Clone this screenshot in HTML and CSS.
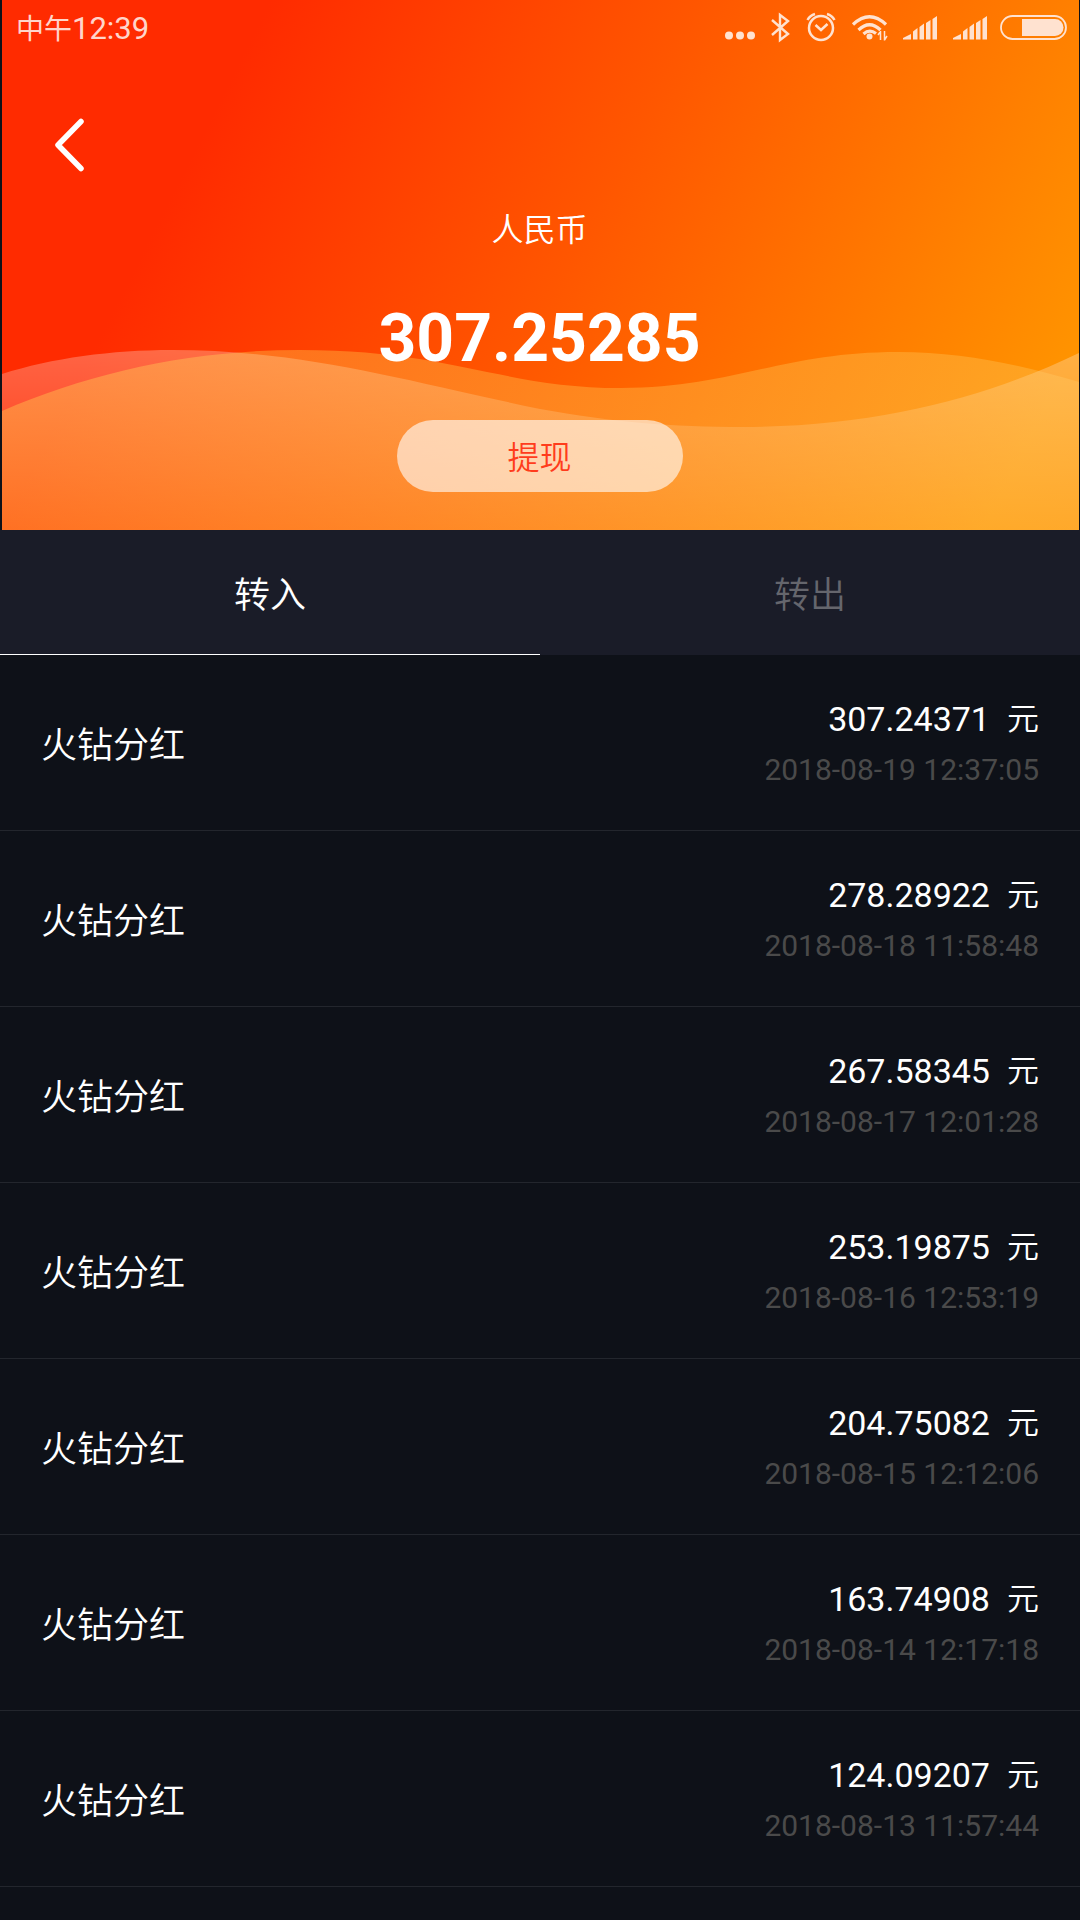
FILE: index.html
```html
<!DOCTYPE html>
<html lang="zh-CN">
<head>
  <meta charset="UTF-8" />
  <meta name="viewport" content="width=device-width, initial-scale=1.0" />
  <title>人民币</title>
  <link rel="stylesheet" href="styles.css">
</head>
<body>
  <header class="hero">
    <svg class="waves" viewBox="0 0 1077 530" preserveAspectRatio="none">
      <defs>
        <linearGradient id="fadeBack" x1="0" y1="350" x2="0" y2="530" gradientUnits="userSpaceOnUse">
          <stop offset="0" stop-color="#fff" stop-opacity=".27" />
          <stop offset="1" stop-color="#fff" stop-opacity=".05" />
        </linearGradient>
        <linearGradient id="fadeFront" x1="0" y1="0" x2="1077" y2="0" gradientUnits="userSpaceOnUse">
          <stop offset="0" stop-color="#fffa58" stop-opacity=".3" />
          <stop offset="1" stop-color="#ffcf70" stop-opacity=".3" />
        </linearGradient>
      </defs>
      <path fill="url(#fadeBack)" d="M0 374C50 358 110 350 170 350C300 350 400 380 538 409C610 422 670 427 741 427C880 427 990 395 1077 353V530H0Z" />
      <path fill="url(#fadeFront)" d="M0 411C90 372 190 350 298 350C450 350 500 388 619 388C730 388 780 352 896 352C960 352 1020 365 1077 382V530H0Z" />
    </svg>

    <div class="status">
      <span class="time">中午<span class="clock">12:39</span></span>
      <svg class="status-icons" width="346" height="36" viewBox="724 10 346 36" fill="none" stroke="#ffe2d0">
        <g fill="#ffe2d0" stroke="none">
          <circle cx="729" cy="35.5" r="4" /><circle cx="740" cy="35.5" r="4" /><circle cx="751" cy="35.5" r="4" />
        </g>
        <path stroke-width="2.4" d="M772 20L788 34L780 40V15L788 21L772 35" />
        <circle cx="821" cy="28" r="12" stroke-width="2.5" />
        <path stroke-width="2.5" d="M815.5 25L821 30L827.5 24M807.5 20Q810 15.5 815 14M827 14Q832 15.5 834.5 20" />
        <path stroke-width="3.2" d="M853 24.5Q869.5 9 886 24.5M858.5 30Q869.5 19.5 880.5 30M863.5 34Q869.5 28.5 876 33.5" />
        <circle cx="869.5" cy="36.5" r="3" fill="#ffe2d0" stroke="none" />
        <path stroke-width="1.5" d="M880.5 31V40M878 35L880.5 31.5M884.5 31V40.5M887 36L884.5 40" />
        <g id="signal" fill="#ffe2d0" stroke="none">
          <path d="M903 39.5V38L911 34V39.5ZM913 39.5V31.5L917.5 28V39.5ZM919.5 39.5V27L924 23.5V39.5ZM926 39.5V23L930.5 20V39.5ZM932.5 39.5V19L937 16V39.5Z" />
        </g>
        <use href="#signal" x="50" />
        <rect x="1001" y="16" width="65" height="23" rx="11.5" stroke-width="1.8" />
        <path fill="#ffe2d0" stroke="none" d="M1022 19H1055A8.5 8.5 0 0 1 1055 36H1022Z" />
      </svg>
    </div>

    <a class="back" href="#">
      <svg width="30" height="54" viewBox="0 0 30 54" fill="none" stroke="#fff" stroke-width="5.5" stroke-linecap="round" stroke-linejoin="round">
        <path d="M27 3.5L4 27L27 50.5" />
      </svg>
    </a>
    <div class="currency">人民币</div>
    <div class="balance">307.25285</div>
    <button class="withdraw">提现</button>
  </header>

  <nav class="tabs">
    <div class="tab active">转入</div>
    <div class="tab">转出</div>
  </nav>

  <ul class="list">
    <li class="row">
      <span class="name">火钻分红</span>
      <div class="info">
        <div class="amount"><span>307.24371</span><span class="unit">元</span></div>
        <div class="date">2018-08-19 12:37:05</div>
      </div>
    </li>
    <li class="row">
      <span class="name">火钻分红</span>
      <div class="info">
        <div class="amount"><span>278.28922</span><span class="unit">元</span></div>
        <div class="date">2018-08-18 11:58:48</div>
      </div>
    </li>
    <li class="row">
      <span class="name">火钻分红</span>
      <div class="info">
        <div class="amount"><span>267.58345</span><span class="unit">元</span></div>
        <div class="date">2018-08-17 12:01:28</div>
      </div>
    </li>
    <li class="row">
      <span class="name">火钻分红</span>
      <div class="info">
        <div class="amount"><span>253.19875</span><span class="unit">元</span></div>
        <div class="date">2018-08-16 12:53:19</div>
      </div>
    </li>
    <li class="row">
      <span class="name">火钻分红</span>
      <div class="info">
        <div class="amount"><span>204.75082</span><span class="unit">元</span></div>
        <div class="date">2018-08-15 12:12:06</div>
      </div>
    </li>
    <li class="row">
      <span class="name">火钻分红</span>
      <div class="info">
        <div class="amount"><span>163.74908</span><span class="unit">元</span></div>
        <div class="date">2018-08-14 12:17:18</div>
      </div>
    </li>
    <li class="row">
      <span class="name">火钻分红</span>
      <div class="info">
        <div class="amount"><span>124.09207</span><span class="unit">元</span></div>
        <div class="date">2018-08-13 11:57:44</div>
      </div>
    </li>
  </ul>
</body>
</html>
```
FILE: styles.css
```css
* {
  box-sizing: border-box;
}
body {
  margin: 0;
  height: 1920px;
  overflow: hidden;
  background: #0e1118;
  color: #fff;
  font-family: Roboto, "Noto Sans CJK SC", sans-serif;
  font-weight: 400;
}
.hero {
  position: relative;
  height: 530px;
  margin: 0 1px 0 2px;
  padding-right: 2px;
  display: flex;
  flex-direction: column;
  align-items: center;
  background: linear-gradient(117deg, #ff2b00 240px, #ff5600 620px, #ff9300 1115px);
}
.waves {
  position: absolute;
  left: 0;
  top: 0;
  width: 100%;
  height: 100%;
}
.hero > div, .back, .withdraw {
  z-index: 1;
}
.status {
  width: 100%;
  height: 56px;
  padding: 0 7px 0 14px;
  display: flex;
  align-items: center;
  justify-content: space-between;
  color: #ffd5cb;
}
.time {
  font-size: 28px;
  font-weight: 400;
  line-height: 58px;
  height: 56px;
}
.clock {
  font-size: 31px;
}
.back {
  align-self: flex-start;
  margin: 62px 0 0 52px;
  height: 54px;
}
.currency {
  margin-top: 35px;
  height: 46px;
  line-height: 46px;
  font-size: 32px;
  font-weight: 350;
}
.balance {
  margin-top: 47px;
  height: 78px;
  line-height: 78px;
  font-size: 66px;
  font-weight: 700;
}
.withdraw {
  margin-top: 42px;
  width: 286px;
  height: 72px;
  padding: 4px 0 0;
  border: none;
  border-radius: 36px;
  background: rgba(255, 255, 255, 0.6);
  color: #ff3c1c;
  font-family: inherit;
  font-size: 32px;
  font-weight: 350;
  line-height: 68px;
}
.tabs {
  display: flex;
  height: 125px;
  background: #1a1c28;
}
.tab {
  flex: 1;
  line-height: 133px;
  text-align: center;
  font-size: 36px;
  font-weight: 350;
  color: #65666d;
}
.tab.active {
  color: #fff;
  border-bottom: 1px solid #fff;
}
.list {
  margin: 0;
  padding: 0;
  list-style: none;
}
.row {
  display: flex;
  justify-content: space-between;
  align-items: center;
  height: 176px;
  padding: 0 41px;
  border-bottom: 1px solid #23262d;
}
.name {
  padding-bottom: 2px;
  font-size: 36px;
  font-weight: 350;
}
.info {
  padding-top: 4px;
  text-align: right;
}
.amount {
  display: flex;
  justify-content: flex-end;
  gap: 17px;
  height: 50px;
  line-height: 48px;
  font-size: 34px;
}
.unit {
  font-size: 32px;
  font-weight: 350;
}
.date {
  height: 50px;
  line-height: 50px;
  font-size: 30px;
  color: #4a4a4a;
}
```
